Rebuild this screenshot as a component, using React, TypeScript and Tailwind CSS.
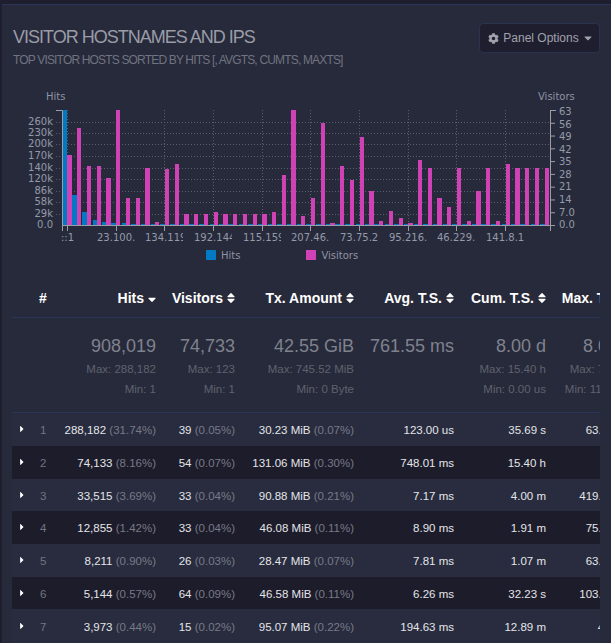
import { FaCog, FaSort, FaSortDown, FaCaretRight, FaCaretDown } from "react-icons/fa";

const pinkLefts = [67,77,87,97,106,116,126,136,145,155,165,175,184,194,204,214,223,233,243,253,262,272,282,291,301,311,321,330,340,350,360,369,379,389,399,408,418,428,437,447,457,467,476,486,496,506,515,525,535,545];
const pinkTops = [155,128,166,166,178,110,198,198,168,222,169,164,214,214,214,212,214,214,214,214,214,212,175,110,216,198,123,223,166,180,137,191,221,211,218,223,160,168,198,207,168,221,191,168,221,164,168,168,168,168];
const blueTops = [110,195,212,220,222,223,223];
const hGrid = [122,133,144,156,168,179,191,202,214];
const vGrid = [67,116,164,213,262,310,359,408,456,505];
const leftLabels: [string, number][] = [["260k",121],["230k",132],["200k",143.5],["170k",155],["140k",167],["120k",178.5],["86k",190],["58k",201.5],["29k",213],["0.0",224.5]];
const rightLabels: [string, number][] = [["63",111],["56",124],["49",136.5],["42",149],["35",161.5],["28",174],["21",186.5],["14",199],["7.0",212],["0.0",224]];
const xLabels = ["::1","23.100.","134.119.","192.144.","115.159.","207.46.","73.75.2","95.216.","46.229.","141.8.1"];

function Chart() {
  const oy = 85;
  return (
    <svg width="609" height="160" viewBox={`0 ${oy} 609 160`} className="block -ml-[2px]" fontFamily="'DejaVu Sans', sans-serif" fontSize="10">
      <defs>
        {vGrid.map((x, i) => (
          <clipPath id={`c${i}`} key={x}><rect x={x - 19} y={228} width={38} height={16} /></clipPath>
        ))}
      </defs>
      {hGrid.map((y) => (
        <line key={y} x1={56} x2={550} y1={y + 0.5} y2={y + 0.5} stroke="#5a5e6c" strokeDasharray="1 2" />
      ))}
      {vGrid.map((x) => (
        <line key={x} x1={x + 0.5} x2={x + 0.5} y1={110} y2={225} stroke="#5a5e6c" strokeDasharray="1 2" />
      ))}
      {pinkLefts.map((x, i) => {
        const prev = i === 0 ? 62 : pinkLefts[i - 1];
        const w = x - prev === 9 || i === 0 ? 5 : 4;
        const bw = i === 0 ? 5 : x - prev === 9 ? 4 : i % 3 === 0 ? 4 : 5;
        const bt = blueTops[i] ?? 224;
        return (
          <g key={x}>
            <rect x={i === 0 ? 63 : x - bw} y={bt} width={i === 0 ? 4 : bw} height={225 - bt} fill="#007bc3" />
            <rect x={x} y={pinkTops[i]} width={w} height={225 - pinkTops[i]} fill="#d041b5" />
          </g>
        );
      })}
      <path d="M56 110.5H62.5V231M62 225.5H550.5M550.5 110V231M550.5 110.5H556" stroke="#9b9ea6" fill="none" />
      {rightLabels.map(([, y], i) => (
        i > 0 ? <line key={i} x1={551} x2={555} y1={110.5 + i * 12.78} y2={110.5 + i * 12.78} stroke="#9b9ea6" /> : null
      ))}
      {vGrid.slice(1).map((x) => (
        <line key={x} x1={x + 0.5} x2={x + 0.5} y1={225} y2={231} stroke="#9b9ea6" />
      ))}
      <line x1={67.5} x2={67.5} y1={225} y2={231} stroke="#9b9ea6" />
      <g fill="#949aa8">
        <text x={46} y={100} fill="#8d93a3">Hits</text>
        <text x={538} y={100} fill="#8d93a3">Visitors</text>
        {leftLabels.map(([t, y]) => (
          <text key={t} x={53} y={y + 3.5} textAnchor="end">{t}</text>
        ))}
        {rightLabels.map(([t, y]) => (
          <text key={t + y} x={559} y={y + 3.5}>{t}</text>
        ))}
        {xLabels.map((t, i) => (
          <g key={t} clipPath={`url(#c${i})`}>
            <text x={vGrid[i] - 19} y={241} dx={i === 0 ? 13 : 0}>{t}</text>
          </g>
        ))}
      </g>
    </svg>
  );
}

type Row = [string, string, string, string, string, string, string, string, string, string, number];
const rows: Row[] = [
  ["1","288,182","(31.74%)","39","(0.05%)","30.23 MiB","(0.07%)","123.00 us","35.69 s","63.93 ms",34],
  ["2","74,133","(8.16%)","54","(0.07%)","131.06 MiB","(0.30%)","748.01 ms","15.40 h","1.15 h",33],
  ["3","33,515","(3.69%)","33","(0.04%)","90.88 MiB","(0.21%)","7.17 ms","4.00 m","419.25 ms",32],
  ["4","12,855","(1.42%)","33","(0.04%)","46.08 MiB","(0.11%)","8.90 ms","1.91 m","75.34 ms",33],
  ["5","8,211","(0.90%)","26","(0.03%)","28.47 MiB","(0.07%)","7.81 ms","1.07 m","63.17 ms",33],
  ["6","5,144","(0.57%)","64","(0.09%)","46.58 MiB","(0.11%)","6.26 ms","32.23 s","103.42 ms",32],
  ["7","3,973","(0.44%)","15","(0.02%)","95.07 MiB","(0.22%)","194.63 ms","12.89 m","4.17 m",34],
];

function Head({ label, down, w }: { label: string; down?: boolean; w: string }) {
  return (
    <th className={`${w} pr-2 text-right font-bold text-[14px] text-white whitespace-nowrap`}>
      {label}
      {down ? <FaSortDown className="inline ml-1 w-2 h-[14px] -mt-[5px] align-middle" /> : <FaSort className="inline ml-1 w-2 h-[14px] -mt-[3px] align-middle" />}
    </th>
  );
}

function Sum({ main, max, min }: { main: string; max?: string; min?: string }) {
  return (
    <td className="pr-2 pt-[17px] align-top text-right whitespace-nowrap">
      <div className="text-[18px] leading-[22px] text-[#7f828d]">{main}</div>
      {max && <div className="mt-[2px] text-[11.5px] leading-[20px] text-[#5f626e]">{max}</div>}
      {min && <div className="text-[11.5px] leading-[20px] text-[#5f626e]">{min}</div>}
    </td>
  );
}

export default function App() {
  return (
    <div className="h-[643px] w-[611px] overflow-hidden bg-[#1e1e2e] pl-[2px] pt-1 font-['Liberation_Sans',Arial,sans-serif]">
      <div className="h-full border-t border-[#29365a] bg-[#272a3b] pl-[10px] pr-[11px]">
        <div className="flex items-start justify-between pt-[18px]">
          <div className="ml-[1px] mt-[1px]">
            <h3 className="text-[18px] leading-[26px] tracking-[-1px] text-[#9a9ca6]">VISITOR HOSTNAMES AND IPS</h3>
            <p className="mt-[1px] text-[12px] leading-[18px] tracking-[-0.83px] text-[#707380]">TOP VISITOR HOSTS SORTED BY HITS [, AVGTS, CUMTS, MAXTS]</p>
          </div>
          <button className="flex h-[30px] w-[121px] items-center justify-center gap-1 rounded border border-[#29334f] bg-[#1e1e2e] pl-[2px] text-[12px] text-[#a0a2ac]">
            <FaCog className="h-[11px] w-[11px]" />
            <span>Panel Options</span>
            <FaCaretDown className="h-3 w-[10px]" />
          </button>
        </div>

        <div className="-ml-[10px] mt-[16px]">
          <Chart />
        </div>
        <div className="mt-[3px] flex h-[14px] items-center font-['DejaVu_Sans',sans-serif] text-[10px] text-[#8d93a3]">
          <div className="ml-[194px] flex items-center gap-[5px]"><span className="h-[10px] w-[10px] bg-[#007bc3]" /><span>Hits</span></div>
          <div className="ml-[66px] flex items-center gap-[5px]"><span className="h-[10px] w-[10px] bg-[#d041b5]" /><span>Visitors</span></div>
        </div>

        <div className="mt-[19px] overflow-hidden">
          <table className="w-[629px] max-w-none table-fixed border-collapse">
            <thead>
              <tr className="h-[36px] border-b border-[#29365a]">
                <th className="w-[18px]" />
                <th className="w-[27px] text-left pl-[9px] text-[14px] font-bold text-white">#</th>
                <Head w="w-[107px]" label="Hits" down />
                <Head w="w-[79px]" label="Visitors" />
                <Head w="w-[119px]" label="Tx. Amount" />
                <Head w="w-[100px]" label="Avg. T.S." />
                <Head w="w-[92px]" label="Cum. T.S." />
                <Head w="w-[87px]" label="Max. T.S." />
              </tr>
            </thead>
            <tbody>
              <tr className="h-[95px] border-b border-[#29365a]">
                <td /><td />
                <Sum main="908,019" max="Max: 288,182" min="Min: 1" />
                <Sum main="74,733" max="Max: 123" min="Min: 1" />
                <Sum main="42.55 GiB" max="Max: 745.52 MiB" min="Min: 0 Byte" />
                <Sum main="761.55 ms" />
                <Sum main="8.00 d" max="Max: 15.40 h" min="Min: 0.00 us" />
                <Sum main="8.00 h" max="Max: 7.50 m" min="Min: 11.00 us" />
              </tr>
              {rows.map((r, i) => (
                <tr key={r[0]} style={{ height: r[10] }} className={`text-[11.5px] text-[#e4e5e9] ${i % 2 === 1 ? "bg-[#1d1c2b]" : "bg-[#282c3e]"}`}>
                  <td className="pl-[6px] pb-[1px]"><FaCaretRight className="h-[10px] w-[8px] text-white" /></td>
                  <td className="pl-[10px] pt-[3px] text-[#727582]">{r[0]}</td>
                  <td className="pr-2 pt-[3px] text-right whitespace-nowrap">{r[1]} <span className="text-[#777a87]">{r[2]}</span></td>
                  <td className="pr-2 pt-[3px] text-right whitespace-nowrap">{r[3]} <span className="text-[#777a87]">{r[4]}</span></td>
                  <td className="pr-2 pt-[3px] text-right whitespace-nowrap">{r[5]} <span className="text-[#777a87]">{r[6]}</span></td>
                  <td className="pr-2 pt-[3px] text-right whitespace-nowrap">{r[7]}</td>
                  <td className="pr-2 pt-[3px] text-right whitespace-nowrap">{r[8]}</td>
                  <td className="pr-2 pt-[3px] text-right whitespace-nowrap">{r[9]}</td>
                </tr>
              ))}
            </tbody>
          </table>
        </div>
      </div>
    </div>
  );
}
